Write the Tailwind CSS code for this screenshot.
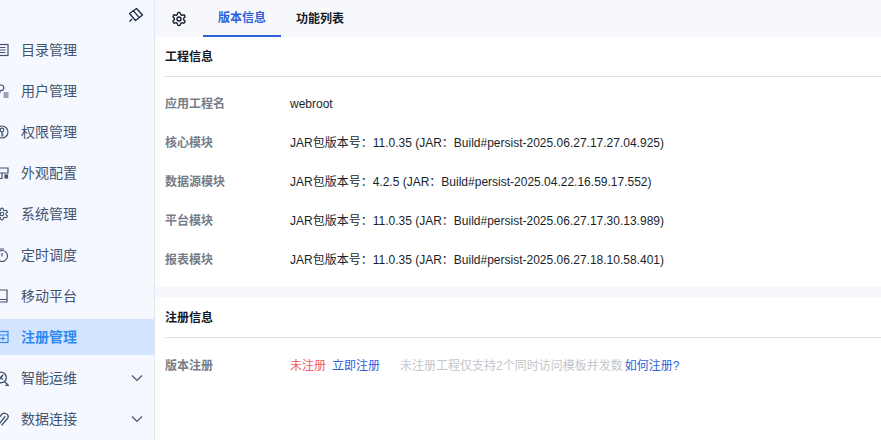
<!DOCTYPE html>
<html lang="zh">
<head>
<meta charset="UTF-8">
<script src="https://cdn.jsdelivr.net/npm/@tailwindcss/browser@4"></script>
<title>注册管理</title>
</head>
<body class="bg-white font-['Liberation_Sans','Noto_Sans_CJK_SC',sans-serif] overflow-hidden">
<div class="flex w-[881px] h-[440px] overflow-hidden">
  <!-- sidebar -->
  <aside class="w-[155px] shrink-0 h-full bg-[#f5f8ff] border-r border-[#e3e6ee] overflow-hidden">
    <div class="h-[32px] flex items-start justify-end pr-[10px] pt-[7px] text-[#1b2a44]">
      <svg width="16" height="16" viewBox="0 0 16 16" fill="none" stroke="currentColor" stroke-width="1.3" stroke-linejoin="round"><path d="M1.500 6.500L8.500 1.500l6 6.500-7 5.500zM5.500 3.800l5.500 6.500M1.500 14.500l2.500-2.500"/></svg>
    </div>
    <nav class="flex flex-col gap-[5px] text-sm text-[#44546f]">
      <div class="h-[36px] flex items-center">
        <svg class="ml-[-5px] mr-3 shrink-0" width="14" height="14" viewBox="0 0 14 14" fill="none" stroke="currentColor" stroke-width="1.2"><rect x="1" y="1.500" width="12" height="11"/><path d="M3.500 4.500h7M3.500 7h7M3.500 9.500h7"/></svg>
        <span>目录管理</span>
      </div>
      <div class="h-[36px] flex items-center">
        <svg class="ml-[-5px] mr-3 shrink-0" width="14" height="14" viewBox="0 0 14 14" fill="none" stroke="currentColor" stroke-width="1.2"><circle cx="6" cy="3.800" r="2.800"/><path d="M1 12.500c0-2.500 2-4.500 5-4.500M8.500 9h5M8.500 11h5M8.500 13h5"/></svg>
        <span>用户管理</span>
      </div>
      <div class="h-[36px] flex items-center">
        <svg class="ml-[-5px] mr-3 shrink-0" width="14" height="14" viewBox="0 0 14 14" fill="none" stroke="currentColor" stroke-width="1.2"><circle cx="7" cy="7" r="6"/><circle cx="7" cy="5" r="1.800"/><path d="M7 6.800v4h1.500M7 9h1.300"/></svg>
        <span>权限管理</span>
      </div>
      <div class="h-[36px] flex items-center">
        <svg class="ml-[-5px] mr-3 shrink-0" width="14" height="14" viewBox="0 0 14 14" fill="none" stroke="currentColor" stroke-width="1.200"><path d="M1 2h12v5H1zM3 7v5.500h4V7"/><rect x="10" y="9" width="2.500" height="3" fill="currentColor"/></svg>
        <span>外观配置</span>
      </div>
      <div class="h-[36px] flex items-center">
        <svg class="ml-[-5px] mr-3 shrink-0" width="14" height="14" viewBox="0 0 24 24" fill="none" stroke="currentColor" stroke-width="2"><path d="M12.220 2h-.44a2 2 0 0 0-2 2v.18a2 2 0 0 1-1 1.730l-.43.25a2 2 0 0 1-2 0l-.15-.08a2 2 0 0 0-2.730.73l-.22.38a2 2 0 0 0 .73 2.730l.15.1a2 2 0 0 1 1 1.720v.51a2 2 0 0 1-1 1.740l-.15.09a2 2 0 0 0-.73 2.730l.22.38a2 2 0 0 0 2.730.73l.15-.08a2 2 0 0 1 2 0l.43.25a2 2 0 0 1 1 1.730V20a2 2 0 0 0 2 2h.44a2 2 0 0 0 2-2v-.18a2 2 0 0 1 1-1.730l.43-.25a2 2 0 0 1 2 0l.15.08a2 2 0 0 0 2.730-.73l.22-.39a2 2 0 0 0-.73-2.730l-.15-.08a2 2 0 0 1-1-1.740v-.5a2 2 0 0 1 1-1.740l.15-.09a2 2 0 0 0 .73-2.730l-.22-.38a2 2 0 0 0-2.730-.73l-.15.08a2 2 0 0 1-2 0l-.43-.25a2 2 0 0 1-1-1.730V4a2 2 0 0 0-2-2z"/><circle cx="12" cy="12" r="3"/></svg>
        <span>系统管理</span>
      </div>
      <div class="h-[36px] flex items-center">
        <svg class="ml-[-5px] mr-3 shrink-0" width="14" height="14" viewBox="0 0 14 14" fill="none" stroke="currentColor" stroke-width="1.200"><circle cx="7" cy="8" r="5.500"/><path d="M7 5v3.500M5 1h4"/></svg>
        <span>定时调度</span>
      </div>
      <div class="h-[36px] flex items-center">
        <svg class="ml-[-5px] mr-3 shrink-0" width="14" height="14" viewBox="0 0 14 14" fill="none" stroke="currentColor" stroke-width="1.200"><path d="M2 1h10v12H2zM2 10.500h10"/></svg>
        <span>移动平台</span>
      </div>
      <div class="h-[36px] flex items-center bg-[#d3e4fe] text-[#2f8af5] font-semibold">
        <svg class="ml-[-5px] mr-3 shrink-0" width="14" height="14" viewBox="0 0 14 14" fill="none" stroke="currentColor" stroke-width="1.200"><rect x="1" y="1.500" width="12" height="11"/><path d="M1 5h12M5 8.500h5.500M8 6.500v4"/></svg>
        <span>注册管理</span>
      </div>
      <div class="h-[36px] flex items-center">
        <svg class="ml-[-6px] mr-3 shrink-0" width="15" height="15" viewBox="0 0 14 14" fill="none" stroke="currentColor" stroke-width="1.300"><circle cx="6.500" cy="6" r="5"/><path d="M9.800 9.800L13.500 13.500h-3M4 4.500l4.500 3.500M8.500 3.500L5 8"/></svg>
        <span>智能运维</span>
        <svg class="ml-[54px]" width="12" height="12" viewBox="0 0 12 12" fill="none" stroke="currentColor" stroke-width="1.200"><path d="M1 3.500l5 5 5-5"/></svg>
      </div>
      <div class="h-[36px] flex items-center">
        <svg class="ml-[-6px] mr-3 shrink-0" width="15" height="15" viewBox="0 0 14 14" fill="none" stroke="currentColor" stroke-width="1.300"><path d="M4 13.500c-2 0-3.500-2-2.500-4L7 2.500c1.500-2 5-1.500 6 .5.500 1.200.2 2.500-.8 3.500L7 12.500"/><path d="M5 11l5.500-7"/></svg>
        <span>数据连接</span>
        <svg class="ml-[54px]" width="12" height="12" viewBox="0 0 12 12" fill="none" stroke="currentColor" stroke-width="1.200"><path d="M1 3.500l5 5 5-5"/></svg>
      </div>
    </nav>
  </aside>

  <!-- main -->
  <main class="flex-1 min-w-0 text-xs">
    <div class="h-[37px] bg-[#f7f8fc] flex items-stretch text-[#111827]">
      <div class="w-[48px] flex items-center justify-center">
        <svg width="16" height="16" viewBox="0 0 24 24" fill="none" stroke="currentColor" stroke-width="2"><path d="M12.220 2h-.44a2 2 0 0 0-2 2v.18a2 2 0 0 1-1 1.730l-.43.25a2 2 0 0 1-2 0l-.15-.08a2 2 0 0 0-2.730.73l-.22.38a2 2 0 0 0 .73 2.730l.15.1a2 2 0 0 1 1 1.720v.51a2 2 0 0 1-1 1.740l-.15.09a2 2 0 0 0-.73 2.730l.22.38a2 2 0 0 0 2.730.73l.15-.08a2 2 0 0 1 2 0l.43.25a2 2 0 0 1 1 1.730V20a2 2 0 0 0 2 2h.44a2 2 0 0 0 2-2v-.18a2 2 0 0 1 1-1.730l.43-.25a2 2 0 0 1 2 0l.15.08a2 2 0 0 0 2.730-.73l.22-.39a2 2 0 0 0-.73-2.730l-.15-.08a2 2 0 0 1-1-1.740v-.5a2 2 0 0 1 1-1.740l.15-.09a2 2 0 0 0 .73-2.730l-.22-.38a2 2 0 0 0-2.730-.73l-.15.08a2 2 0 0 1-2 0l-.43-.25a2 2 0 0 1-1-1.730V4a2 2 0 0 0-2-2z"/><circle cx="12" cy="12" r="3"/></svg>
      </div>
      <div class="w-[78px] flex items-center justify-center font-semibold text-[#2f5fdb] border-b-2 border-[#2f5fdb]">版本信息</div>
      <div class="px-[15px] flex items-center font-semibold">功能列表</div>
    </div>

    <section class="h-[250px]">
      <h2 class="h-[40px] ml-[10px] pt-[1px] flex items-center border-b border-[#dfe1e8] font-semibold text-[#111827]">工程信息</h2>
      <div class="pt-[7px]">
        <div class="h-[39px] flex items-center pl-[10px]"><span class="w-[125px] text-[#767c88] font-semibold">应用工程名</span><span class="text-[#1a1f2b]">webroot</span></div>
        <div class="h-[39px] flex items-center pl-[10px]"><span class="w-[125px] text-[#767c88] font-semibold">核心模块</span><span class="text-[#1a1f2b]">JAR包版本号：11.0.35 (JAR：Build#persist-2025.06.27.17.27.04.925)</span></div>
        <div class="h-[39px] flex items-center pl-[10px]"><span class="w-[125px] text-[#767c88] font-semibold">数据源模块</span><span class="text-[#1a1f2b]">JAR包版本号：4.2.5 (JAR：Build#persist-2025.04.22.16.59.17.552)</span></div>
        <div class="h-[39px] flex items-center pl-[10px]"><span class="w-[125px] text-[#767c88] font-semibold">平台模块</span><span class="text-[#1a1f2b]">JAR包版本号：11.0.35 (JAR：Build#persist-2025.06.27.17.30.13.989)</span></div>
        <div class="h-[39px] flex items-center pl-[10px]"><span class="w-[125px] text-[#767c88] font-semibold">报表模块</span><span class="text-[#1a1f2b]">JAR包版本号：11.0.35 (JAR：Build#persist-2025.06.27.18.10.58.401)</span></div>
      </div>
    </section>

    <div class="h-[10px] bg-[#f7f8fc]"></div>

    <section>
      <h2 class="h-[41px] ml-[10px] pt-[1px] flex items-center border-b border-[#dfe1e8] font-semibold text-[#111827]">注册信息</h2>
      <div class="h-[54px] pt-[1px] flex items-center pl-[10px]">
        <span class="w-[125px] text-[#767c88] font-semibold">版本注册</span>
        <span class="text-[#ef5a5f]">未注册</span>
        <span class="ml-[6px] text-[#2f5fdb]">立即注册</span>
        <span class="ml-[20px] text-[#c4c6cb]">未注册工程仅支持2个同时访问模板并发数</span>
        <span class="ml-[2px] text-[#2f5fdb]">如何注册?</span>
      </div>
    </section>
  </main>
</div>
</body>
</html>
